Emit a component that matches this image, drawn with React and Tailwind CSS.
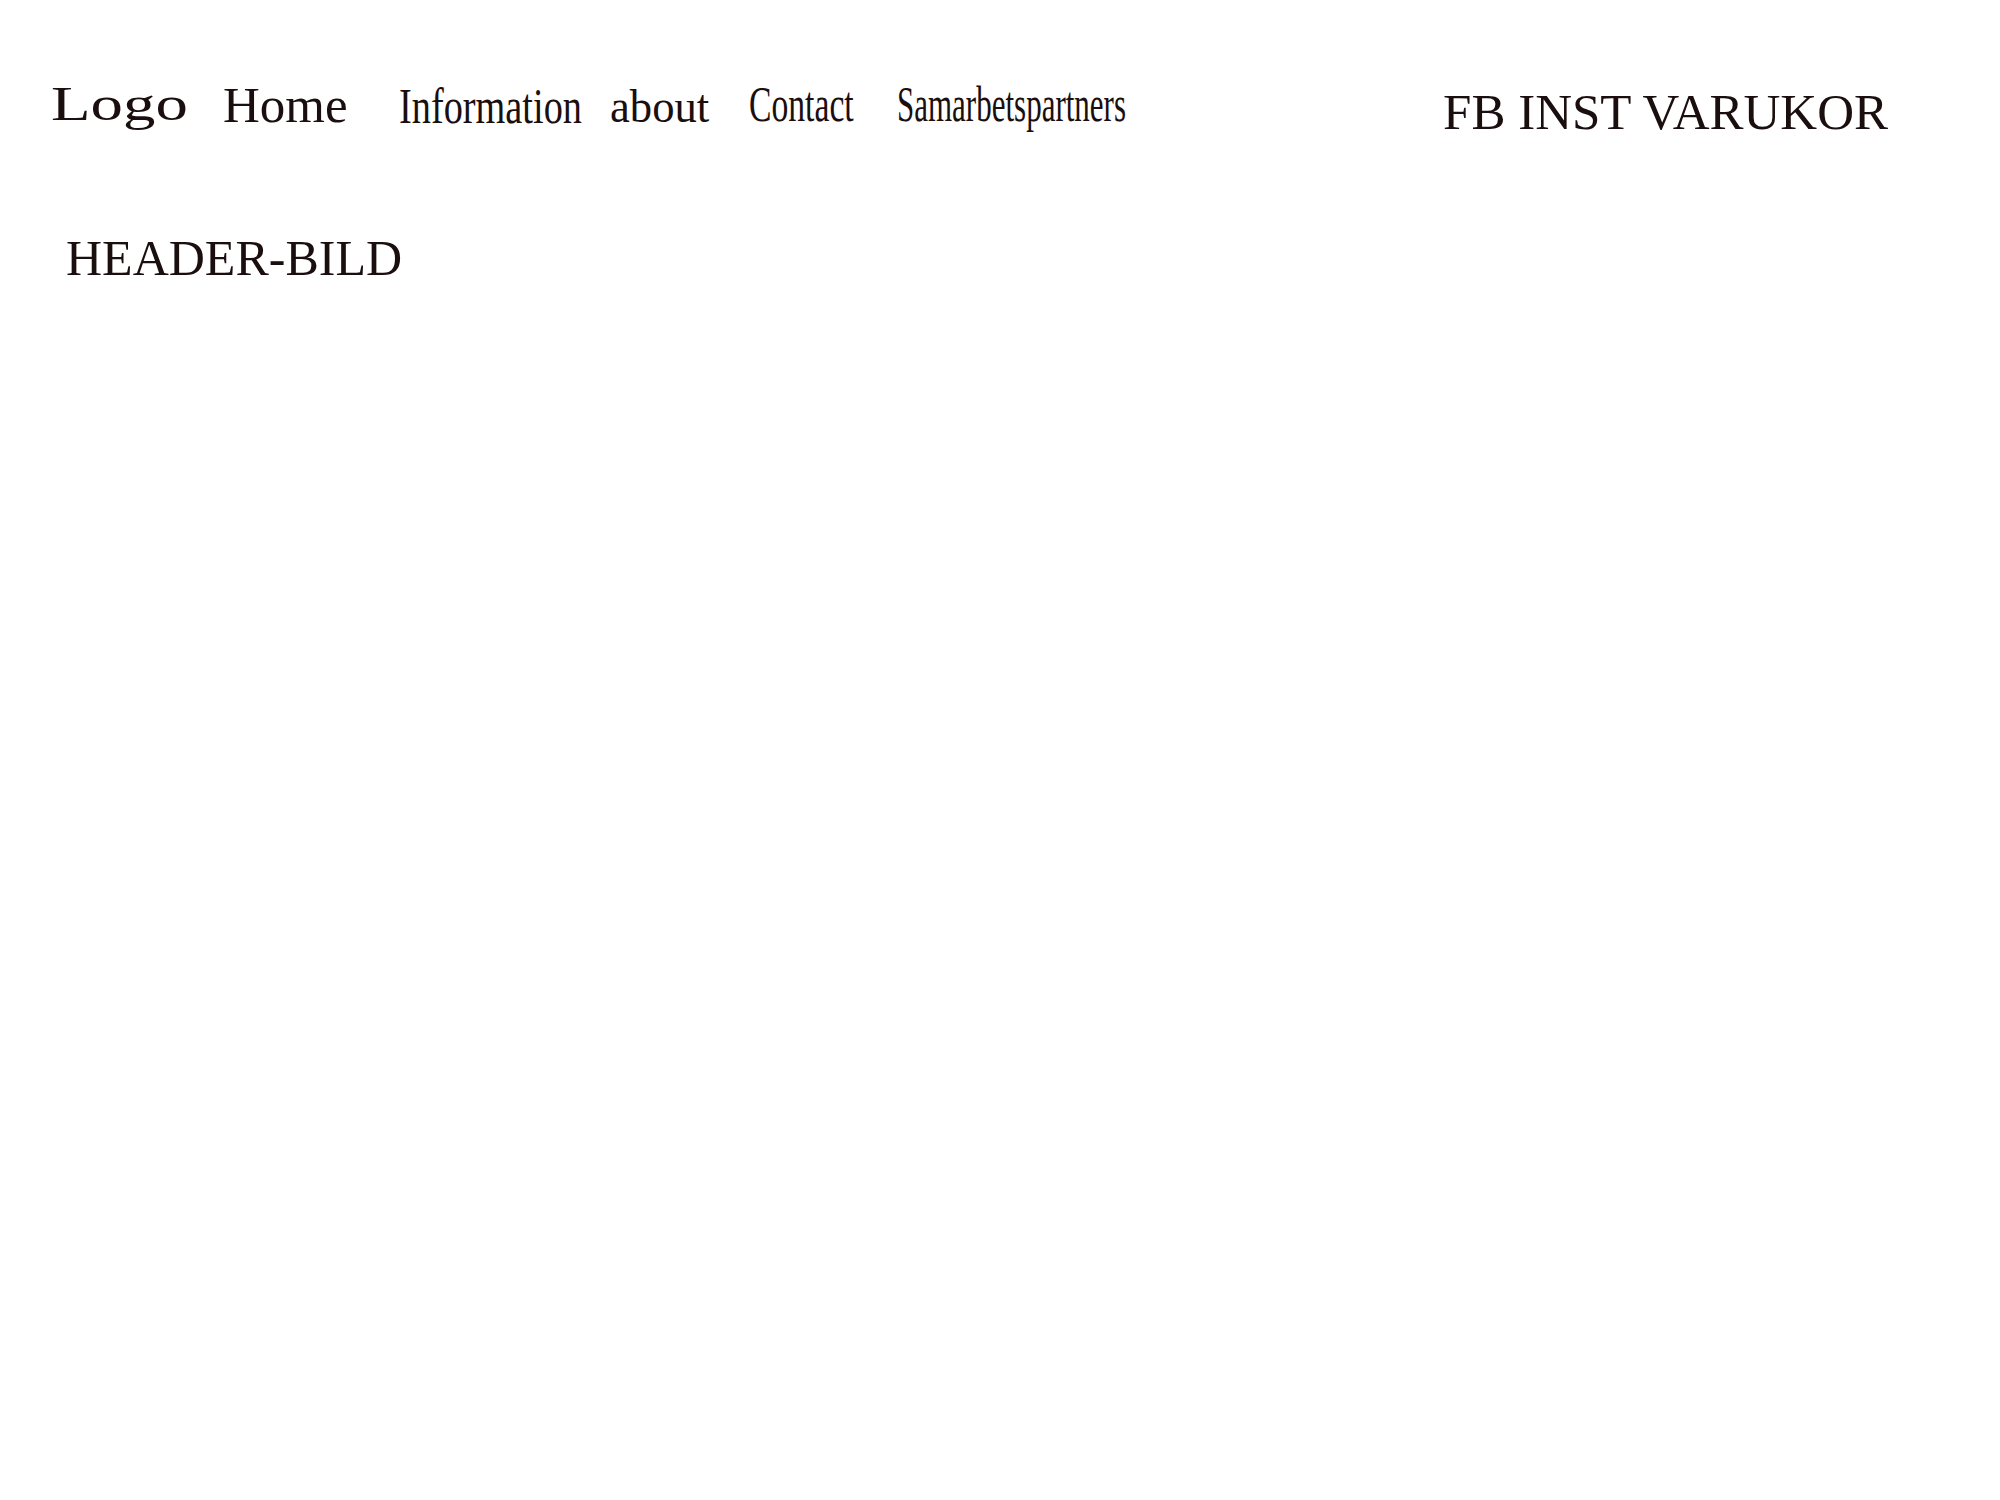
const navItems = [
  { label: "Logo", width: "w-[138px]", gap: "ml-0", top: "mt-[80px]", text: "text-[48px] scale-x-[1.35]" },
  { label: "Home", width: "w-[125px]", gap: "ml-[34px]", top: "mt-[80px]", text: "text-[50px] scale-x-[1.02]" },
  { label: "Information", width: "w-[181px]", gap: "ml-[51px]", top: "mt-[81px]", text: "text-[50px] scale-x-[0.766]" },
  { label: "about", width: "w-[97px]", gap: "ml-[30px]", top: "mt-[83px]", text: "text-[47px] scale-x-[0.95]" },
  { label: "Contact", width: "w-[103px]", gap: "ml-[42px]", top: "mt-[79px]", text: "text-[51px] scale-x-[0.66]" },
  { label: "Samarbetspartners", width: "w-[227px]", gap: "ml-[45px]", top: "mt-[79px]", text: "text-[50px] scale-x-[0.62]" },
]

const App = () => {
  return (
    <div className="min-h-screen w-full bg-white text-[#1a0e0e] font-['Liberation_Serif',serif]">
      {/* Top nav */}
      <nav className="flex items-start pl-[51px] pr-[112px]">
        {navItems.map((item) => (
          <div key={item.label} className={`${item.width} ${item.gap} ${item.top} shrink-0`}>
            <span className={`inline-block origin-left whitespace-nowrap leading-none ${item.text}`}>
              {item.label}
            </span>
          </div>
        ))}
        <div className="ml-auto mt-[87px] whitespace-nowrap text-[51px] leading-none">FB INST VARUKOR</div>
      </nav>

      {/* Header image placeholder */}
      <div className="pl-[66px] mt-[95px]">
        <h1 className="text-[50px] leading-none font-normal">HEADER-BILD</h1>
      </div>
    </div>
  )
}

export default App
